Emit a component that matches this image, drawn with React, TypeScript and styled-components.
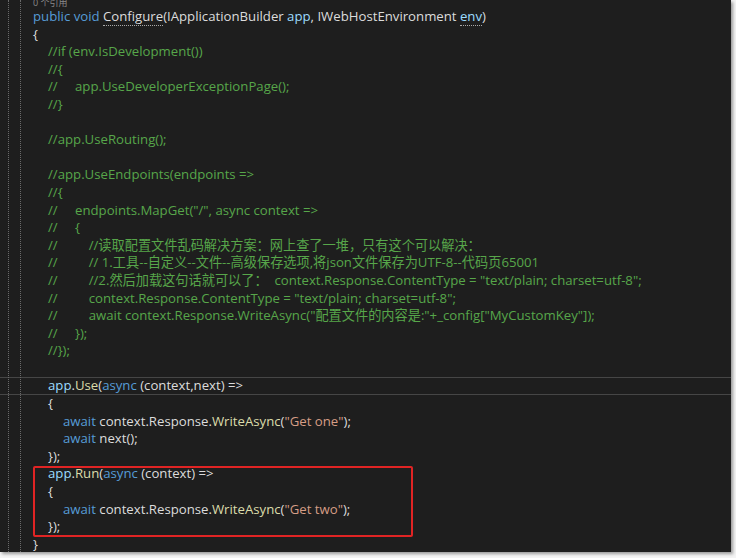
import * as React from "react";
import styled, { createGlobalStyle } from "styled-components";

const Global = createGlobalStyle`
  body { margin: 0; background: #fff; }
`;

const Frame = styled.div`
  width: 736px;
  height: 558px;
  background: #f4f4f4;
  overflow: hidden;
`;

const Editor = styled.div`
  position: relative;
  width: 731px;
  height: 552px;
  background: #1e1e1e;
  box-shadow: 2px 2px 3px #9a9a9a;
  overflow: hidden;
  font-family: "Open Sans", "Noto Sans CJK SC", sans-serif;
  font-size: 13.2px;
  color: #dcdcdc;
`;

const Gutter = styled.div<{ $x: number }>`
  position: absolute;
  top: 0;
  bottom: 0;
  left: ${(p) => p.$x}px;
  border-left: 1px dotted #6a6a6a;
`;

const Lens = styled.div`
  height: 8px;
  padding-left: 33px;
  font-size: 9px;
  line-height: 6px;
  color: #8a8a8a;
  overflow: hidden;
`;

const Line = styled.div<{ $ind: number; $hl?: boolean }>`
  height: 17.6px;
  line-height: 17.6px;
  padding-left: ${(p) => 33 + p.$ind * 15}px;
  white-space: pre;
  box-sizing: border-box;
  ${(p) => (p.$hl ? "border-top: 1px solid #464646; border-bottom: 1px solid #464646; line-height: 15.6px;" : "")}
`;

const K = styled.span`color: #569cd6;`;
const V = styled.span`color: #9cdcfe;`;
const M = styled.span`color: #dcdcaa;`;
const S = styled.span`color: #d69d85;`;
const C = styled.span`color: #57a64a;`;
const U = styled.span`border-bottom: 1px dotted #aaa;`;
const Ct = styled.span`display: inline-block; width: 27px;`;

const RunBox = styled.div`
  position: absolute;
  left: 33px;
  top: 466px;
  width: 376px;
  height: 67px;
  border: 2px solid #e02424;
  border-radius: 2px;
`;

const cm = (pre: string, text: string) => (
  <C>
    <Ct>{pre}</Ct>
    {text}
  </C>
);

export default function App() {
  return (
    <Frame>
      <Global />
      <Editor>
        <Gutter $x={8} />
        <Gutter $x={20} />
        <Lens>0 个引用</Lens>
        <Line $ind={0}>
          <K>public</K> <K>void</K> <U>Configure</U>(IApplicationBuilder <V>app</V>, IWebHostEnvironment <U><V>env</V></U>)
        </Line>
        <Line $ind={0}>{"{"}</Line>
        <Line $ind={1}><C>//if (env.IsDevelopment())</C></Line>
        <Line $ind={1}><C>//{"{"}</C></Line>
        <Line $ind={1}>{cm("//", "app.UseDeveloperExceptionPage();")}</Line>
        <Line $ind={1}><C>//{"}"}</C></Line>
        <Line $ind={1} />
        <Line $ind={1}><C>//app.UseRouting();</C></Line>
        <Line $ind={1} />
        <Line $ind={1}><C>//app.UseEndpoints(endpoints =&gt;</C></Line>
        <Line $ind={1}><C>//{"{"}</C></Line>
        <Line $ind={1}>{cm("//", "endpoints.MapGet(\"/\", async context =>")}</Line>
        <Line $ind={1}>{cm("//", "{")}</Line>
        <Line $ind={1}>{cm("//", "    //读取配置文件乱码解决方案：网上查了一堆，只有这个可以解决：")}</Line>
        <Line $ind={1}>{cm("//", "    // 1.工具--自定义--文件--高级保存选项,将json文件保存为UTF-8--代码页65001")}</Line>
        <Line $ind={1}>{cm("//", "    //2.然后加载这句话就可以了：  context.Response.ContentType = \"text/plain; charset=utf-8\";")}</Line>
        <Line $ind={1}>{cm("//", "    context.Response.ContentType = \"text/plain; charset=utf-8\";")}</Line>
        <Line $ind={1}>{cm("//", "    await context.Response.WriteAsync(\"配置文件的内容是:\"+_config[\"MyCustomKey\"]);")}</Line>
        <Line $ind={1}>{cm("//", "});")}</Line>
        <Line $ind={1}><C>//{"});"}</C></Line>
        <Line $ind={1} />
        <Line $ind={1} $hl>
          <V>app</V>.<M>Use</M>(<K>async</K> (context,next) =&gt;
        </Line>
        <Line $ind={1}>{"{"}</Line>
        <Line $ind={2}>
          <K>await</K> context.Response.<M>WriteAsync</M>(<S>"Get one"</S>);
        </Line>
        <Line $ind={2}>
          <K>await</K> next();
        </Line>
        <Line $ind={1}>{"});"}</Line>
        <Line $ind={1}>
          <V>app</V>.<M>Run</M>(<K>async</K> (context) =&gt;
        </Line>
        <Line $ind={1}>{"{"}</Line>
        <Line $ind={2}>
          <K>await</K> context.Response.<M>WriteAsync</M>(<S>"Get two"</S>);
        </Line>
        <Line $ind={1}>{"});"}</Line>
        <Line $ind={0}>{"}"}</Line>
        <RunBox />
      </Editor>
    </Frame>
  );
}
